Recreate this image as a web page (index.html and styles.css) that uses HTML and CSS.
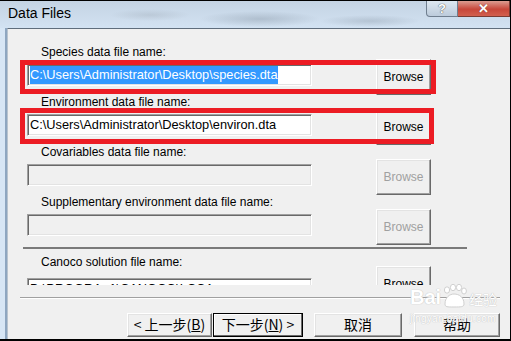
FILE: index.html
```html
<!DOCTYPE html>
<html lang="en">
<head>
    <meta charset="UTF-8">
    <title>Data Files</title>
    <link rel="stylesheet" href="styles.css">
</head>
<body>

<div class="window">
    <!-- barre de titre -->
    <div class="titlebar">
        <span class="title">Data Files</span>
        <div class="caption">
            <span class="cap-help">?</span>
            <span class="cap-close">&#x2715;</span>
        </div>
    </div>

    <div class="main">
        <div class="frame-left"></div>

        <div class="client">
            <div class="panel">
                <div class="group">
                    <div class="label">Species data file name:</div>
                    <div class="row">
                        <div class="field"><span class="sel">C:\Users\Administrator\Desktop\species.dta</span></div>
                        <div class="browse">Browse</div>
                    </div>
                </div>
                <div class="group">
                    <div class="label">Environment data file name:</div>
                    <div class="row">
                        <div class="field">C:\Users\Administrator\Desktop\environ.dta</div>
                        <div class="browse">Browse</div>
                    </div>
                </div>
                <div class="group">
                    <div class="label">Covariables data file name:</div>
                    <div class="row">
                        <div class="field disabled"></div>
                        <div class="browse disabled">Browse</div>
                    </div>
                </div>
                <div class="group">
                    <div class="label">Supplementary environment data file name:</div>
                    <div class="row">
                        <div class="field disabled"></div>
                        <div class="browse disabled">Browse</div>
                    </div>
                </div>

                <div class="sep"></div>

                <div class="group group-solution">
                    <div class="label">Canoco solution file name:</div>
                    <div class="row">
                        <div class="field">D:\PROGRA~1\CANOCO\LCCA</div>
                        <div class="browse">Browse</div>
                    </div>
                </div>
            </div>

            <div class="sep-bottom"></div>

            <div class="buttons">
                <div class="btn btn-prev">&lt; 上一步(<u>B</u>)</div>
                <div class="btn btn-next">下一步(<u>N</u>) &gt;</div>
                <div class="btn btn-cancel">取消</div>
                <div class="btn btn-help">帮助</div>
            </div>

            <!-- filigrane -->
            <div class="watermark">
                <div class="wm-logo">
                    <span>Bai</span>
                    <svg width="26" height="24" viewBox="0 0 26 24">
                        <ellipse cx="6" cy="6" rx="2.6" ry="3.2" fill="#fff" stroke="#d0d0d0"/>
                        <ellipse cx="12" cy="3.5" rx="2.6" ry="3.2" fill="#fff" stroke="#d0d0d0"/>
                        <ellipse cx="18" cy="3.5" rx="2.6" ry="3.2" fill="#fff" stroke="#d0d0d0"/>
                        <ellipse cx="23" cy="7" rx="2.4" ry="3" fill="#fff" stroke="#d0d0d0"/>
                        <path d="M4 20 C4 13 9 10 13 10 C18 10 23 13 23 20 C23 23 20 23 13 23 C6 23 4 23 4 20 Z" fill="#fff" stroke="#d0d0d0"/>
                    </svg>
                    <span class="wm-cn">经验</span>
                </div>
                <div class="wm-url">jingyan.baidu.com</div>
            </div>

            <!-- cadres rouges -->
            <div class="mark mark-1"></div>
            <div class="mark mark-2"></div>
        </div>
    </div>
</div>

</body>
</html>
```

FILE: styles.css
```css
body {
    margin: 0;
    width: 511px;
    height: 341px;
    overflow: hidden;
    font-family: "Liberation Sans", Arial, sans-serif;
    font-size: 12px;
    color: #000;
    background: #000;
}

.window {
    width: 510px;
    height: 338px;
    border-top: 1px solid #000;
    border-right: 1px solid #000;
    border-bottom: 2px solid #000;
    display: flex;
    flex-direction: column;
    background: #cfdff0;
}

/* titre */
.titlebar {
    height: 27px;
    display: flex;
    align-items: flex-start;
    background:
        radial-gradient(ellipse 60px 8px at 260px 18px, rgba(120, 135, 150, 0.35), transparent),
        radial-gradient(ellipse 50px 6px at 370px 20px, rgba(120, 135, 150, 0.3), transparent),
        radial-gradient(ellipse 40px 6px at 150px 14px, rgba(140, 150, 160, 0.25), transparent),
        linear-gradient(to bottom, #c4d3e3, #d2e2f2);
}
.title {
    font-size: 14px;
    margin: 4px 0 0 8px;
    color: #000;
}
.caption {
    margin-left: auto;
    display: flex;
}
.cap-help {
    width: 30px;
    height: 15px;
    border: 1px solid #6f7e8f;
    border-top: none;
    border-radius: 0 0 0 4px;
    background: linear-gradient(to bottom, #dde7f1, #bccbdb);
    color: #fff;
    font-weight: bold;
    font-size: 13px;
    line-height: 15px;
    text-align: center;
    text-shadow: 0 0 1px #555, 0 0 1px #555;
}
.cap-close {
    width: 51px;
    height: 15px;
    border: 1px solid #7a3b33;
    border-top: none;
    border-left: none;
    background: linear-gradient(to bottom, #dc9d91, #c8473a 55%, #d2604f);
    color: #fff;
    font-weight: bold;
    font-size: 13px;
    line-height: 15px;
    text-align: center;
    text-shadow: 0 0 1px #5a2a24;
}

.main {
    flex: 1;
    display: flex;
}
.frame-left {
    width: 5px;
    background: #d7e6f5;
    border-right: 2px solid #8ea6c0;
}

.client {
    flex: 1;
    position: relative;
    background: #f0f0f0;
    border-top: 1px solid #5f6d7c;
    border-left: 1px solid #b7c3cf;
}

.panel {
    height: 256px;
    overflow: hidden;
    padding-top: 16px;
    box-sizing: border-box;
}
.group {
    padding-left: 19px;
}
.label {
    padding-left: 14px;
    height: 14px;
    line-height: 14px;
}
.row {
    display: flex;
    align-items: flex-start;
    height: 36px;
}
.field {
    width: 285px;
    height: 22px;
    margin-top: 5px;
    margin-right: 64px;
    box-sizing: border-box;
    background: #fff;
    border: 1px solid;
    border-color: #a0a0a0 #fff #fff #a0a0a0;
    box-shadow: inset 1px 1px #696969, inset -1px -1px #e3e3e3;
    padding-left: 2px;
    font-size: 12.8px;
    line-height: 20px;
    white-space: nowrap;
    overflow: hidden;
}
.field.disabled {
    background: #f0f0f0;
}
.sel {
    display: inline-block;
    line-height: 18px;
    background: #3399ff;
    color: #fff;
}
.browse {
    width: 55px;
    height: 36px;
    box-sizing: border-box;
    border: 1px solid;
    border-color: #fff #696969 #696969 #fff;
    box-shadow: inset -1px -1px #a0a0a0, inset 1px 1px #e3e3e3;
    text-align: center;
    line-height: 34px;
}
.browse.disabled {
    color: #a0a0a0;
}

.sep {
    margin: 2px 0 0 15px;
    width: 444px;
    height: 2px;
    background: #7a7a7a;
}
.group-solution .label {
    margin-top: 6px;
}
.group-solution .row {
    margin-top: -3px;
}
.group-solution .field {
    margin-top: 12px;
}

.sep-bottom {
    margin: 12px 0 0 12px;
    width: 480px;
    border-top: 1px solid #a0a0a0;
    border-bottom: 1px solid #fff;
}

.buttons {
    margin-top: 14px;
    padding-right: 10px;
    display: flex;
    justify-content: flex-end;
}
.btn {
    height: 24px;
    box-sizing: border-box;
    border: 1px solid;
    border-color: #fff #696969 #696969 #fff;
    box-shadow: inset -1px -1px #a0a0a0, inset 1px 1px #e3e3e3;
    font-family: "Noto Sans CJK SC", sans-serif;
    font-size: 14px;
    line-height: 21px;
    text-align: center;
}
.btn-prev {
    width: 85px;
    margin-right: 1px;
}
.btn-next {
    width: 90px;
    margin-right: 11px;
    border-color: #000;
    box-shadow: inset -1px -1px #696969, inset 1px 1px #fff;
}
.btn-cancel {
    width: 88px;
    margin-right: 12px;
}
.btn-help {
    width: 86px;
}

.watermark {
    position: absolute;
    left: 402px;
    top: 255px;
    color: #fff;
    text-shadow: 0 0 1px #c4c4c4, 0 0 1px #c4c4c4;
    font-family: "Liberation Sans", Arial, sans-serif;
}
.wm-logo {
    display: flex;
    align-items: flex-end;
    font-size: 20px;
    font-weight: bold;
    line-height: 22px;
}
.wm-cn {
    font-family: "Noto Sans CJK SC", sans-serif;
    font-size: 14px;
    font-weight: normal;
    line-height: 18px;
    margin-left: 2px;
}
.wm-url {
    font-size: 10px;
    margin-top: 5px;
    letter-spacing: 0.3px;
}

.mark {
    position: absolute;
    border: 5px solid #ec1c24;
    box-sizing: border-box;
}
.mark-1 {
    left: 12px;
    top: 31px;
    width: 416px;
    height: 34px;
}
.mark-2 {
    left: 12px;
    top: 79px;
    width: 414px;
    height: 36px;
}
```
